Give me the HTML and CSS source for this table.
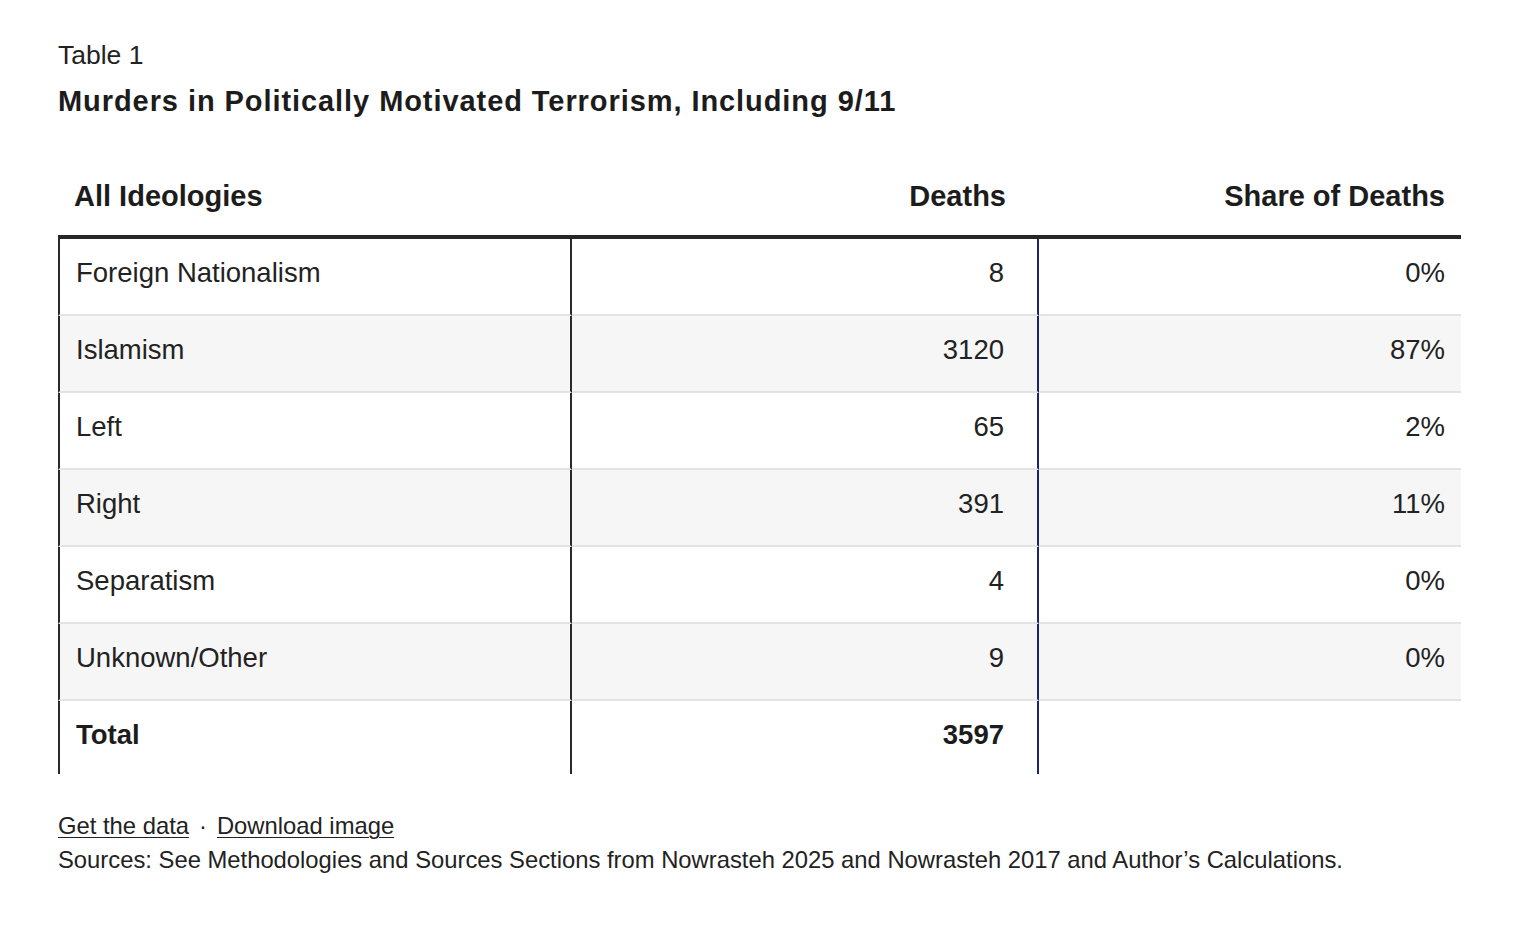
FILE: index.html
```html
<!DOCTYPE html>
<html lang="en">
<head>
<meta charset="utf-8">
<title>Table 1 — Murders in Politically Motivated Terrorism, Including 9/11</title>
<link rel="stylesheet" href="styles.css">
</head>
<body>
<figure class="figure">
  <div class="eyebrow">Table 1</div>
  <h2 class="title">Murders in Politically Motivated Terrorism, Including 9/11</h2>
  <div class="table" role="table">
    <div class="th c1">All Ideologies</div>
    <div class="th c2">Deaths</div>
    <div class="th c3">Share of Deaths</div>

    <div class="cell c1">Foreign Nationalism</div>
    <div class="cell c2">8</div>
    <div class="cell c3">0%</div>

    <div class="cell c1 alt">Islamism</div>
    <div class="cell c2 alt">3120</div>
    <div class="cell c3 alt">87%</div>

    <div class="cell c1">Left</div>
    <div class="cell c2">65</div>
    <div class="cell c3">2%</div>

    <div class="cell c1 alt">Right</div>
    <div class="cell c2 alt">391</div>
    <div class="cell c3 alt">11%</div>

    <div class="cell c1">Separatism</div>
    <div class="cell c2">4</div>
    <div class="cell c3">0%</div>

    <div class="cell c1 alt">Unknown/Other</div>
    <div class="cell c2 alt">9</div>
    <div class="cell c3 alt">0%</div>

    <div class="cell c1 total">Total</div>
    <div class="cell c2 total">3597</div>
    <div class="cell c3 total"></div>
  </div>
  <div class="footer">
    <div class="links"><a href="#" class="link">Get the data</a><span class="dot">·</span><a href="#" class="link">Download image</a></div>
    <div class="sources">Sources: See Methodologies and Sources Sections from Nowrasteh 2025 and Nowrasteh 2017 and Author’s Calculations.</div>
  </div>
</figure>
</body>
</html>
```
FILE: styles.css
```css
html, body {
  margin: 0;
  padding: 0;
  background: #ffffff;
}

body {
  font-family: "Liberation Sans", Arial, sans-serif;
  color: #222222;
}

.figure {
  margin: 0;
  padding: 39px 67px 0 58px;
}

.eyebrow {
  font-size: 26.5px;
  line-height: 32px;
  color: #222222;
}

.title {
  margin: 12px 0 0;
  font-size: 29px;
  line-height: 36px;
  font-weight: 700;
  letter-spacing: 0.93px;
  color: #1c1c1c;
}

.table {
  margin-top: 41px;
  display: grid;
  grid-template-columns: 514px 467px 422px;
}

.th {
  box-sizing: border-box;
  font-size: 29px;
  line-height: 36px;
  font-weight: 700;
  color: #1c1c1c;
  padding: 18px 16px 21px;
  border-bottom: 4px solid #262626;
}

.th.c2,
.th.c3 {
  text-align: right;
}

.th.c2 {
  padding-right: 33px;
}

.cell {
  box-sizing: border-box;
  height: 77px;
  font-size: 27.5px;
  line-height: 32px;
  padding: 17.5px 16px 0;
  border-bottom: 2px solid #e3e3e3;
  background: #ffffff;
}

.cell.alt {
  background: #f6f6f6;
}

.cell.c1 {
  border-left: 2px solid #2a2a2a;
  border-right: 2px solid #2a2a2a;
}

.cell.c2 {
  text-align: right;
  padding-right: 33px;
  border-right: 2px solid #1b2470;
}

.cell.c3 {
  text-align: right;
}

.cell.total {
  height: 73px;
  border-bottom: none;
  font-weight: 700;
  color: #1c1c1c;
  padding-top: 18px;
}

.footer {
  margin-top: 35px;
  font-size: 23.8px;
  line-height: 34px;
  color: #222222;
}

.link {
  color: #222222;
  text-decoration: underline;
  text-underline-offset: 3px;
  text-decoration-thickness: 1px;
}

.dot {
  margin: 0 10px;
}
```
